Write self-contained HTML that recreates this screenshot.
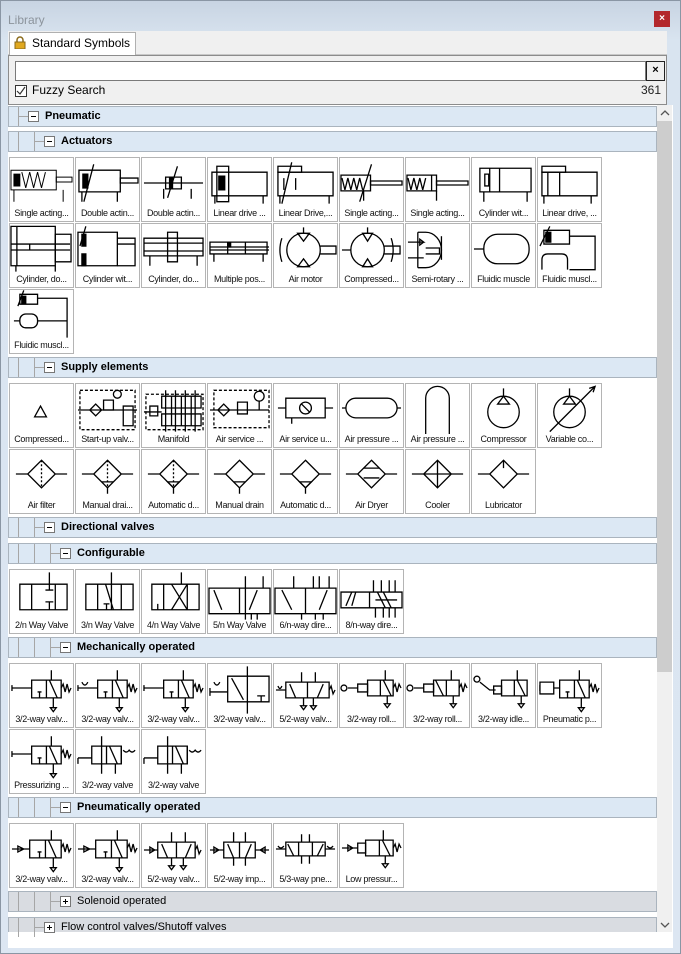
<!DOCTYPE html>
<html><head><meta charset="utf-8">
<style>
*{box-sizing:border-box;margin:0;padding:0}
body{width:681px;height:954px;overflow:hidden;background:#dbe5f1;font-family:"Liberation Sans",sans-serif;position:relative}
.win{position:absolute;left:0;top:0;width:681px;height:954px;border:1px solid #8a96a4;background:linear-gradient(#c8d4e2,#d9e4f0 40px,#dce6f2)}
.title{position:absolute;left:8px;top:13px;font-size:12px;color:#8c949c}
.close{position:absolute;left:654px;top:11px;width:16px;height:16px;background:#b3282c;color:#fff;font-size:10px;font-weight:bold;text-align:center;line-height:15px}
.strip{position:absolute;left:8px;top:31px;width:659px;height:24px;background:#f0f0f0;border-bottom:1px solid #c8c8c8}
.tab{position:absolute;left:9px;top:32px;width:127px;height:24px;background:#fff;border:1px solid #b0b0b0;border-bottom:none;font-size:12px;line-height:20px;padding-left:22px;color:#000}
.lock{position:absolute;left:4px;top:3px;width:12px;height:13px}
.panel{position:absolute;left:8px;top:55px;width:659px;height:50px;background:#f0f0f0;border:1px solid #8c8c8c}
.search{position:absolute;left:6px;top:5px;width:631px;height:20px;background:#fff;border:1px solid #7a7a7a}
.sx{position:absolute;left:637px;top:5px;width:19px;height:20px;border:1px solid #222;background:#f0f0f0;font-size:11px;font-weight:bold;text-align:center;line-height:17px}
.cb{position:absolute;left:6px;top:29px;width:12px;height:12px;border:1px solid #333;background:#fff}
.fz{position:absolute;left:23px;top:27px;font-size:12px}
.cnt{position:absolute;right:5px;top:27px;font-size:12px;color:#222}
.tree{position:absolute;left:8px;top:105px;width:665px;height:827px;background:#fff;overflow:hidden}
.sb{position:absolute;left:657px;top:105px;width:15px;height:827px;background:#f0f0f0}
.thumb{position:absolute;left:657px;top:121px;width:15px;height:551px;background:#cdcdcd}
.bottom{position:absolute;left:8px;top:932px;width:665px;height:16px;background:#fff}
.h{position:absolute;left:8px;width:649px;height:21px;background:#dce8f4;border:1px solid #aab4be;font-size:11px;font-weight:bold;line-height:19px}
.h.g{background:#d9dce1;font-weight:normal}
.v{position:absolute;top:0;width:1px;height:19px;background:#a6a6a6}
.hl{position:absolute;top:9px;height:1px;background:#a6a6a6}
.bx{position:absolute;top:4px;width:11px;height:11px;border:1px solid #777;background:#fff}
.bx:before{content:"";position:absolute;left:2px;top:4px;width:5px;height:1px;background:#000}
.bx.p:after{content:"";position:absolute;left:4px;top:2px;width:1px;height:5px;background:#000}
.ht{position:absolute;top:0}
.t{position:absolute;width:65px;height:65px;border:1px solid #b4b4b4;background:#fff;overflow:hidden}
.t svg{position:absolute;left:0;top:0;width:63px;height:50px}
.t span{position:absolute;left:0;top:50px;width:63px;text-align:center;font-size:9px;letter-spacing:-0.3px;white-space:nowrap;overflow:hidden;color:#111}
svg *{vector-effect:non-scaling-stroke}
.t svg *{stroke-width:1.3}
</style></head><body>
<svg width="0" height="0" style="position:absolute">
<defs>
<g id="cyl1" fill="none" stroke="#000" stroke-width="1"><rect x="1" y="12" width="46" height="20"/><rect x="4" y="16" width="6" height="12" fill="#000"/><path d="M12 14l4 16l4-16l4 16l4-16l4 16l4-16"/><rect x="47" y="19" width="16" height="5"/><path d="M4 32v12M54 32v12"/></g>
<g id="cyl2" fill="none" stroke="#000"><rect x="3" y="12" width="42" height="22"/><rect x="7" y="16" width="5" height="14" fill="#000"/><rect x="45" y="20" width="18" height="5"/><path d="M8 44L18 6M6 34v10M42 34v10"/></g>
<g id="cyl3" fill="none" stroke="#000"><rect x="8" y="10" width="52" height="24"/><path d="M18 10v24M28 10v24M12 34v10M56 34v10"/><rect x="13" y="16" width="4" height="12"/></g>
<g id="valve" fill="none" stroke="#000"><rect x="22" y="16" width="30" height="18"/><path d="M37 16v18M40 16l8 18M42 6v10M26 34v0M28 28h4M30 28v6M44 34v10M41 44h6l-3 4z M52 24l2-4l2 8l2-8l2 8l2-4M2 24h20M2 21v6"/></g>
<g id="valvep" fill="none" stroke="#000"><rect x="20" y="16" width="32" height="18"/><path d="M36 16v18M39 16l8 18M42 6v10M28 28h4M30 28v6M44 34v10M41 44h6l-3 4z M52 24l2-4l2 8l2-8l2 8l2-4M2 25h18M8 22l6 3l-6 3z"/></g>
<g id="dia" fill="none" stroke="#000"><path d="M32 10l14 14l-14 14l-14-14zM6 24h12M46 24h12"/></g>
<g id="cfg" fill="none" stroke="#000"><rect x="10" y="14" width="48" height="26"/><path d="M22 14v26M46 14v26"/></g>
</defs></svg>
<div class="win"></div>
<div class="title">Library</div>
<div class="close">×</div>
<div class="strip"></div>
<div class="tab"><svg class="lock" viewBox="0 0 12 13"><path d="M3 6V4a3 3 0 0 1 6 0v2" fill="none" stroke="#8a6a1a" stroke-width="1.5"/><rect x="1" y="6" width="10" height="7" fill="#e0a820" stroke="#8a6a1a"/></svg>Standard Symbols</div>
<div class="panel"><div class="search"></div><div class="sx">×</div>
<div class="cb"><svg width="10" height="10" viewBox="0 0 10 10" style="position:absolute;left:0;top:0"><path d="M1 5l3 3l5-7" fill="none" stroke="#333" stroke-width="1.2"/></svg></div>
<div class="fz">Fuzzy Search</div><div class="cnt">361</div></div>
<div class="tree"></div>
<div class="sb"></div><div class="thumb"></div>
<svg style="position:absolute;left:660px;top:110px" width="10" height="6"><path d="M1 5l4-4l4 4" fill="none" stroke="#555" stroke-width="1.3"/></svg>
<svg style="position:absolute;left:660px;top:922px" width="10" height="6"><path d="M1 1l4 4l4-4" fill="none" stroke="#555" stroke-width="1.3"/></svg>
<div class="bottom"></div>

<div class="h" style="top:106px"><div class="v" style="left:9px"></div><div class="hl" style="left:9px;width:10px"></div><div class="bx" style="left:19px"></div><div class="ht" style="left:36px">Pneumatic</div></div>
<div class="h" style="top:131px"><div class="v" style="left:9px"></div><div class="v" style="left:25px"></div><div class="hl" style="left:25px;width:10px"></div><div class="bx" style="left:35px"></div><div class="ht" style="left:52px">Actuators</div></div>
<div class="h" style="top:357px"><div class="v" style="left:9px"></div><div class="v" style="left:25px"></div><div class="hl" style="left:25px;width:10px"></div><div class="bx" style="left:35px"></div><div class="ht" style="left:52px">Supply elements</div></div>
<div class="h" style="top:517px"><div class="v" style="left:9px"></div><div class="v" style="left:25px"></div><div class="hl" style="left:25px;width:10px"></div><div class="bx" style="left:35px"></div><div class="ht" style="left:52px">Directional valves</div></div>
<div class="h" style="top:543px"><div class="v" style="left:9px"></div><div class="v" style="left:25px"></div><div class="v" style="left:41px"></div><div class="hl" style="left:41px;width:10px"></div><div class="bx" style="left:51px"></div><div class="ht" style="left:68px">Configurable</div></div>
<div class="h" style="top:637px"><div class="v" style="left:9px"></div><div class="v" style="left:25px"></div><div class="v" style="left:41px"></div><div class="hl" style="left:41px;width:10px"></div><div class="bx" style="left:51px"></div><div class="ht" style="left:68px">Mechanically operated</div></div>
<div class="h" style="top:797px"><div class="v" style="left:9px"></div><div class="v" style="left:25px"></div><div class="v" style="left:41px"></div><div class="hl" style="left:41px;width:10px"></div><div class="bx" style="left:51px"></div><div class="ht" style="left:68px">Pneumatically operated</div></div>
<div class="h g" style="top:891px"><div class="v" style="left:9px"></div><div class="v" style="left:25px"></div><div class="v" style="left:41px"></div><div class="hl" style="left:41px;width:10px"></div><div class="bx p" style="left:51px"></div><div class="ht" style="left:68px">Solenoid operated</div></div>
<div class="h g" style="top:917px;height:15px;border-bottom:none"><div class="v" style="left:9px"></div><div class="v" style="left:25px"></div><div class="hl" style="left:25px;width:10px"></div><div class="bx p" style="left:35px"></div><div class="ht" style="left:52px">Flow control valves/Shutoff valves</div></div>

<div class="t" style="left:9px;top:157px"><svg viewBox="0 0 64 50"><use href="#cyl1"/></svg><span>Single acting...</span></div>
<div class="t" style="left:75px;top:157px"><svg viewBox="0 0 64 50"><use href="#cyl2"/></svg><span>Double actin...</span></div>
<div class="t" style="left:141px;top:157px"><svg viewBox="0 0 64 50"><g fill="none" stroke="#000"><path d="M2 25h60"/><rect x="24" y="19" width="16" height="12"/><rect x="28" y="19" width="3" height="12" fill="#000"/><path d="M26 40L36 8M22 31v10M50 31v10"/></g></svg><span>Double actin...</span></div>
<div class="t" style="left:207px;top:157px"><svg viewBox="0 0 64 50"><g fill="none" stroke="#000"><rect x="4" y="14" width="56" height="24"/><rect x="9" y="8" width="12" height="36"/><rect x="11" y="18" width="6" height="14" fill="#000"/><path d="M7 38v8M56 38v8"/></g></svg><span>Linear drive ...</span></div>
<div class="t" style="left:273px;top:157px"><svg viewBox="0 0 64 50"><g fill="none" stroke="#000"><rect x="4" y="14" width="56" height="24"/><rect x="4" y="8" width="24" height="6"/><path d="M8 46L18 4M10 20v12M22 20v12M6 38v8M56 38v8"/></g></svg><span>Linear Drive,...</span></div>
<div class="t" style="left:339px;top:157px"><svg viewBox="0 0 64 50"><g fill="none" stroke="#000"><rect x="1" y="17" width="30" height="16"/><path d="M2 20l3 12l3-12l3 12l3-12l3 12l3-12l3 12M20 44L32 6"/><rect x="31" y="23" width="32" height="4"/><path d="M24 33v10"/></g></svg><span>Single acting...</span></div>
<div class="t" style="left:405px;top:157px"><svg viewBox="0 0 64 50"><g fill="none" stroke="#000"><rect x="1" y="17" width="30" height="16"/><path d="M2 20l3 12l3-12l3 12l3-12l3 12l3-12M26 17v16"/><rect x="31" y="23" width="32" height="4"/><path d="M31 33v10"/></g></svg><span>Single acting...</span></div>
<div class="t" style="left:471px;top:157px"><svg viewBox="0 0 64 50"><use href="#cyl3"/></svg><span>Cylinder wit...</span></div>
<div class="t" style="left:537px;top:157px"><svg viewBox="0 0 64 50"><g fill="none" stroke="#000"><rect x="4" y="14" width="56" height="24"/><rect x="4" y="8" width="24" height="6"/><path d="M10 14v24M22 14v24M6 38v8M54 38v8"/></g></svg><span>Linear drive, ...</span></div>

<div class="t" style="left:9px;top:223px"><svg viewBox="0 0 64 50"><g fill="none" stroke="#000"><rect x="1" y="2" width="45" height="40"/><path d="M7 2v40M1 20h60M1 26h60M20 20v6"/><rect x="46" y="10" width="16" height="28"/><path d="M6 42v6M46 42v6"/></g></svg><span>Cylinder, do...</span></div>
<div class="t" style="left:75px;top:223px"><svg viewBox="0 0 64 50"><g fill="none" stroke="#000"><rect x="2" y="8" width="40" height="34"/><rect x="6" y="10" width="4" height="12" fill="#000"/><rect x="6" y="30" width="4" height="12" fill="#000"/><path d="M42 14h18v28h-18M42 20h18M4 22L10 2"/></g></svg><span>Cylinder wit...</span></div>
<div class="t" style="left:141px;top:223px"><svg viewBox="0 0 64 50"><g fill="none" stroke="#000"><rect x="2" y="14" width="60" height="18"/><rect x="26" y="8" width="10" height="30"/><path d="M2 19h60M2 27h60M8 32v10M56 32v10"/></g></svg><span>Cylinder, do...</span></div>
<div class="t" style="left:207px;top:223px"><svg viewBox="0 0 64 50"><g fill="none" stroke="#000"><rect x="2" y="18" width="58" height="12"/><path d="M2 23h60M2 26h60M20 18v12M38 18v12M6 30v8M56 30v8"/><rect x="20" y="18" width="3" height="5" fill="#000"/></g></svg><span>Multiple pos...</span></div>
<div class="t" style="left:273px;top:223px"><svg viewBox="0 0 64 50"><g fill="none" stroke="#000"><circle cx="30" cy="26" r="17"/><path d="M30 3v6M24 9l6 8l6-8zM24 43l6-8l6 8zM47 22h16v8h-16M8 14q-4 12 0 24"/></g></svg><span>Air motor</span></div>
<div class="t" style="left:339px;top:223px"><svg viewBox="0 0 64 50"><g fill="none" stroke="#000"><circle cx="28" cy="26" r="17"/><path d="M28 3v6M23 9l5 8l5-8zM23 43l5-8l5 8zM45 22h16v8h-16M2 26h9M52 14q4 12 0 24"/></g></svg><span>Compressed...</span></div>
<div class="t" style="left:405px;top:223px"><svg viewBox="0 0 64 50"><g fill="none" stroke="#000"><path d="M12 8v36M12 8h8a16 18 0 0 1 0 36h-8M20 24h14v6h-14M2 18h16l-4 -3v6l4-3M2 34h16"/><path d="M36 12v24"/></g></svg><span>Semi-rotary ...</span></div>
<div class="t" style="left:471px;top:223px"><svg viewBox="0 0 64 50"><g fill="none" stroke="#000"><rect x="12" y="10" width="46" height="30" rx="14"/><path d="M2 25h10"/></g></svg><span>Fluidic muscle</span></div>
<div class="t" style="left:537px;top:223px"><svg viewBox="0 0 64 50"><g fill="none" stroke="#000"><rect x="6" y="6" width="26" height="14"/><rect x="8" y="8" width="5" height="10" fill="#000"/><path d="M32 12h26v34h-26M2 22L12 2M4 46v-10q0-6 6-6h14q6 0 6 6v10"/></g></svg><span>Fluidic muscl...</span></div>
<div class="t" style="left:9px;top:289px"><svg viewBox="0 0 64 50"><g fill="none" stroke="#000"><rect x="10" y="4" width="18" height="10"/><rect x="12" y="6" width="4" height="7" fill="#000"/><path d="M28 8h30v40M8 16L14 0"/><rect x="10" y="24" width="18" height="14" rx="6"/><path d="M28 31h30M4 31h6"/></g></svg><span>Fluidic muscl...</span></div>

<div class="t" style="left:9px;top:383px"><svg viewBox="0 0 64 50"><path d="M31 22l6 11h-12z" fill="none" stroke="#000"/></svg><span>Compressed...</span></div>
<div class="t" style="left:75px;top:383px"><svg viewBox="0 0 64 50"><g fill="none" stroke="#000"><rect x="4" y="6" width="56" height="40" stroke-dasharray="3 2"/><path d="M2 26h60M20 20l6 6l-6 6l-6-6z"/><rect x="28" y="16" width="10" height="10"/><circle cx="42" cy="10" r="4"/><rect x="48" y="22" width="10" height="20"/></g></svg><span>Start-up valv...</span></div>
<div class="t" style="left:141px;top:383px"><svg viewBox="0 0 64 50"><g fill="none" stroke="#000"><rect x="4" y="10" width="58" height="36" stroke-dasharray="3 2"/><rect x="20" y="12" width="40" height="12"/><rect x="20" y="30" width="40" height="12"/><path d="M30 12v30M40 12v30M50 12v30M2 28h18M24 6v42M34 6v42M44 6v42M54 6v42"/><rect x="8" y="22" width="8" height="10"/></g></svg><span>Manifold</span></div>
<div class="t" style="left:207px;top:383px"><svg viewBox="0 0 64 50"><g fill="none" stroke="#000"><rect x="6" y="6" width="56" height="38" stroke-dasharray="3 2"/><path d="M2 26h60M16 20l6 6l-6 6l-6-6z"/><rect x="30" y="18" width="10" height="12"/><circle cx="52" cy="12" r="5"/><path d="M52 17v9"/></g></svg><span>Air service ...</span></div>
<div class="t" style="left:273px;top:383px"><svg viewBox="0 0 64 50"><g fill="none" stroke="#000"><rect x="12" y="14" width="40" height="20"/><circle cx="32" cy="24" r="6"/><path d="M28 20l8 8M4 24h8M52 24h8M18 34v6"/></g></svg><span>Air service u...</span></div>
<div class="t" style="left:339px;top:383px"><svg viewBox="0 0 64 50"><g fill="none" stroke="#000"><rect x="6" y="14" width="52" height="20" rx="10"/><path d="M2 24h4M58 24h4"/></g></svg><span>Air pressure ...</span></div>
<div class="t" style="left:405px;top:383px"><svg viewBox="0 0 64 50"><rect x="20" y="2" width="24" height="66" rx="12" fill="none" stroke="#000"/></svg><span>Air pressure ...</span></div>
<div class="t" style="left:471px;top:383px"><svg viewBox="0 0 64 50"><g fill="none" stroke="#000"><circle cx="32" cy="28" r="16"/><path d="M32 4v8M26 20l6-8l6 8z" /></g></svg><span>Compressor</span></div>
<div class="t" style="left:537px;top:383px"><svg viewBox="0 0 64 50"><g fill="none" stroke="#000"><circle cx="32" cy="28" r="16"/><path d="M32 4v8M26 20l6-8l6 8zM12 48L58 2M52 4l6-2l-2 6"/></g></svg><span>Variable co...</span></div>
<div class="t" style="left:9px;top:449px"><svg viewBox="0 0 64 50"><use href="#dia"/><path d="M32 10v28" stroke="#000" stroke-dasharray="2 2"/></svg><span>Air filter</span></div>
<div class="t" style="left:75px;top:449px"><svg viewBox="0 0 64 50"><use href="#dia"/><path d="M32 10v28" stroke="#000" stroke-dasharray="2 2"/><path d="M26 32h12M32 38v6" stroke="#000"/></svg><span>Manual drai...</span></div>
<div class="t" style="left:141px;top:449px"><svg viewBox="0 0 64 50"><use href="#dia"/><path d="M32 10v28" stroke="#000" stroke-dasharray="2 2"/><path d="M26 32h12l-6 6zM32 38v6" stroke="#000" fill="none"/></svg><span>Automatic d...</span></div>
<div class="t" style="left:207px;top:449px"><svg viewBox="0 0 64 50"><use href="#dia"/><path d="M26 32h12M32 38v6" stroke="#000"/></svg><span>Manual drain</span></div>
<div class="t" style="left:273px;top:449px"><svg viewBox="0 0 64 50"><use href="#dia"/><path d="M26 32h12l-6 6zM32 38v6" stroke="#000" fill="none"/></svg><span>Automatic d...</span></div>
<div class="t" style="left:339px;top:449px"><svg viewBox="0 0 64 50"><use href="#dia"/><path d="M24 18h16M24 28h16" stroke="#000"/></svg><span>Air Dryer</span></div>
<div class="t" style="left:405px;top:449px"><svg viewBox="0 0 64 50"><use href="#dia"/><path d="M32 10v28M18 24h28" stroke="#000"/></svg><span>Cooler</span></div>
<div class="t" style="left:471px;top:449px"><svg viewBox="0 0 64 50"><use href="#dia"/><path d="M32 10v8" stroke="#000"/></svg><span>Lubricator</span></div>

<div class="t" style="left:9px;top:569px"><svg viewBox="0 0 64 50"><use href="#cfg"/><path d="M40 2v18M36 20h8M40 40v-8M36 32h8" stroke="#000" fill="none"/></svg><span>2/n Way Valve</span></div>
<div class="t" style="left:75px;top:569px"><svg viewBox="0 0 64 50"><use href="#cfg"/><path d="M36 2v38M30 14l8 26M28 34h6M31 34v6" stroke="#000" fill="none"/></svg><span>3/n Way Valve</span></div>
<div class="t" style="left:141px;top:569px"><svg viewBox="0 0 64 50"><use href="#cfg"/><path d="M30 14l16 26M46 14l-16 26M40 2v12M16 34v6" stroke="#000" fill="none"/></svg><span>4/n Way Valve</span></div>
<div class="t" style="left:207px;top:569px"><svg viewBox="0 0 64 50"><g fill="none" stroke="#000"><rect x="1" y="18" width="62" height="26"/><path d="M32 18v26M6 20l8 20M50 20l-8 20M38 6v44M56 6v12M44 44v6M50 44v6"/></g></svg><span>5/n Way Valve</span></div>
<div class="t" style="left:273px;top:569px"><svg viewBox="0 0 64 50"><g fill="none" stroke="#000"><rect x="1" y="18" width="62" height="26"/><path d="M32 18v26M8 20l10 20M54 20l-8 20M20 6v12M40 6v12M46 6v12M56 6v12M28 44v6M42 44v6M50 44v6"/></g></svg><span>6/n-way dire...</span></div>
<div class="t" style="left:339px;top:569px"><svg viewBox="0 0 64 50"><g fill="none" stroke="#000"><rect x="1" y="22" width="62" height="16"/><path d="M30 22v16M6 36l6-14M12 36l4-14M38 22l8 16M44 22l8 16M36 30h22M34 10v12M42 10v12M50 10v12M56 10v12M36 38v10M44 38v10M50 38v10M56 38v10"/></g></svg><span>8/n-way dire...</span></div>

<div class="t" style="left:9px;top:663px"><svg viewBox="0 0 64 50"><use href="#valve"/></svg><span>3/2-way valv...</span></div>
<div class="t" style="left:75px;top:663px"><svg viewBox="0 0 64 50"><use href="#valve"/><path d="M6 18q3 6 6 0" stroke="#000" fill="none"/></svg><span>3/2-way valv...</span></div>
<div class="t" style="left:141px;top:663px"><svg viewBox="0 0 64 50"><use href="#valve"/></svg><span>3/2-way valv...</span></div>
<div class="t" style="left:207px;top:663px"><svg viewBox="0 0 64 50"><g fill="none" stroke="#000"><rect x="20" y="12" width="42" height="26"/><path d="M40 2v48M24 14l12 22M2 28h18M2 24v8M6 18q3 6 6 0M50 32h8M54 32v6"/></g></svg><span>3/2-way valv...</span></div>
<div class="t" style="left:273px;top:663px"><svg viewBox="0 0 64 50"><g fill="none" stroke="#000"><rect x="12" y="18" width="44" height="16"/><path d="M34 18v16M16 20l6 14M50 20l-6 14M28 8v10M42 8v10M30 34v8M40 34v8M27 42h6l-3 4zM37 42h6l-3 4zM56 26l2-4l2 8l2-4M2 26h10M4 22q2 5 4 0"/></g></svg><span>5/2-way valv...</span></div>
<div class="t" style="left:339px;top:663px"><svg viewBox="0 0 64 50"><g fill="none" stroke="#000"><rect x="28" y="16" width="26" height="16"/><path d="M41 16v16M44 16l8 16M46 6v10M48 32v8M45 40h6l-3 4zM54 24l2-4l2 8l2-8l2 4M8 24h10"/><circle cx="4" cy="24" r="3"/><rect x="18" y="20" width="10" height="8"/></g></svg><span>3/2-way roll...</span></div>
<div class="t" style="left:405px;top:663px"><svg viewBox="0 0 64 50"><g fill="none" stroke="#000"><rect x="28" y="16" width="26" height="16"/><path d="M41 16v16M30 16l8 16M46 6v10M48 32v8M45 40h6l-3 4zM54 24l2-4l2 8l2-8l2 4M8 24h10"/><circle cx="4" cy="24" r="3"/><rect x="18" y="20" width="10" height="8"/></g></svg><span>3/2-way roll...</span></div>
<div class="t" style="left:471px;top:663px"><svg viewBox="0 0 64 50"><g fill="none" stroke="#000"><rect x="30" y="16" width="26" height="16"/><path d="M43 16v16M46 16l8 16M46 6v10M50 32v8M47 40h6l-3 4zM8 18l10 8h6"/><circle cx="5" cy="15" r="3"/><rect x="22" y="22" width="8" height="8"/></g></svg><span>3/2-way idle...</span></div>
<div class="t" style="left:537px;top:663px"><svg viewBox="0 0 64 50"><use href="#valve"/><rect x="2" y="18" width="14" height="12" fill="#fff" stroke="#000"/></svg><span>Pneumatic p...</span></div>
<div class="t" style="left:9px;top:729px"><svg viewBox="0 0 64 50"><use href="#valve"/></svg><span>Pressurizing ...</span></div>
<div class="t" style="left:75px;top:729px"><svg viewBox="0 0 64 50"><g fill="none" stroke="#000"><rect x="16" y="16" width="30" height="18"/><path d="M31 16v18M34 16l8 18M26 6v38M40 34v10M2 28h14M2 28v6M48 20q3 4 6 0q3 4 6 0M46 16v18"/></g></svg><span>3/2-way valve</span></div>
<div class="t" style="left:141px;top:729px"><svg viewBox="0 0 64 50"><g fill="none" stroke="#000"><rect x="16" y="16" width="30" height="18"/><path d="M31 16v18M34 16l8 18M26 6v38M40 34v10M2 28h14M2 28v6M48 20q3 4 6 0q3 4 6 0M46 16v18"/></g></svg><span>3/2-way valve</span></div>

<div class="t" style="left:9px;top:823px"><svg viewBox="0 0 64 50"><use href="#valvep"/></svg><span>3/2-way valv...</span></div>
<div class="t" style="left:75px;top:823px"><svg viewBox="0 0 64 50"><use href="#valvep"/></svg><span>3/2-way valv...</span></div>
<div class="t" style="left:141px;top:823px"><svg viewBox="0 0 64 50"><g fill="none" stroke="#000"><rect x="16" y="18" width="38" height="16"/><path d="M35 18v16M20 20l6 14M50 20l-6 14M30 8v10M44 8v10M30 34v8M42 34v8M27 42h6l-3 4zM39 42h6l-3 4zM54 26l2-4l2 8l2-4M2 26h14M8 23l5 3l-5 3z"/></g></svg><span>5/2-way valv...</span></div>
<div class="t" style="left:207px;top:823px"><svg viewBox="0 0 64 50"><g fill="none" stroke="#000"><rect x="16" y="18" width="32" height="16"/><path d="M32 18v16M20 20l6 14M44 20l-6 14M26 8v10M38 8v10M26 34v8M38 34v8M2 26h14M48 26h14M6 23l5 3l-5 3zM58 23l-5 3l5 3z"/></g></svg><span>5/2-way imp...</span></div>
<div class="t" style="left:273px;top:823px"><svg viewBox="0 0 64 50"><g fill="none" stroke="#000"><rect x="12" y="18" width="40" height="14"/><path d="M25 18v14M39 18v14M14 20l6 12M50 20l-6 12M28 10v8M36 10v8M28 32v8M36 32v8M2 25h10M52 25h10M4 22q3 4 6 0M54 22q3 4 6 0"/></g></svg><span>5/3-way pne...</span></div>
<div class="t" style="left:339px;top:823px"><svg viewBox="0 0 64 50"><g fill="none" stroke="#000"><rect x="26" y="16" width="28" height="16"/><path d="M40 16v16M43 16l8 16M44 6v10M46 32v8M43 40h6l-3 4zM54 24l2-4l2 8l2-8l2 4M2 24h16M8 21l5 3l-5 3z"/><rect x="18" y="19" width="8" height="10"/></g></svg><span>Low pressur...</span></div>
</body></html>
